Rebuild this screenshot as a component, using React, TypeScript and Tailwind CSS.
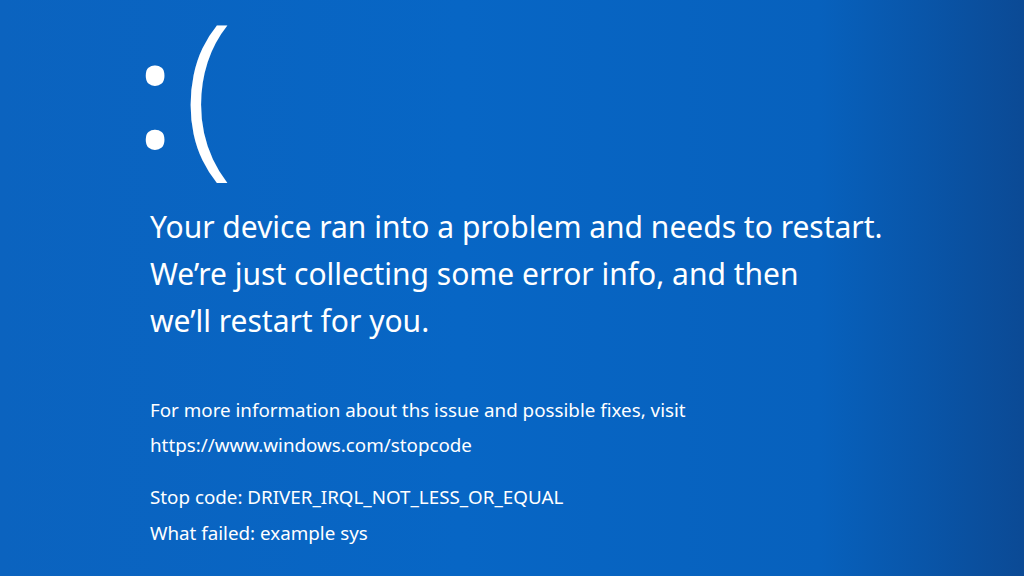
export default function App() {
  return (
    <div
      className="w-[1024px] h-[576px] overflow-hidden text-white bg-[linear-gradient(90deg,#0b63bf_0%,#0766c5_45%,#0761bd_80%,#0b4a95_100%)]"
      style={{ fontFamily: '"Noto Sans", "Open Sans", sans-serif' }}
    >
      <div className="pl-[150px]">
        {/* sad face */}
        <div className="h-[176px] flex items-start">
          <span className="text-[150px] leading-none font-normal -ml-[15px] mt-[15px]">:</span>
          <span className="text-[180px] leading-none font-light ml-[8px] -mt-[5px]">(</span>
        </div>

        <div className="mt-[27px] text-[30px] leading-[47px]">
          <p>Your device ran into a problem and needs to restart.</p>
          <p>We’re just collecting some error info, and then</p>
          <p>we’ll restart for you.</p>
        </div>

        <div className="mt-[49px] text-[18.8px] leading-[35px]">
          <p>For more information about ths issue and possible fixes, visit</p>
          <p>https://www.windows.com/stopcode</p>
        </div>

        <div className="mt-[16px] text-[18.8px] leading-[36px]">
          <p>Stop code: DRIVER_IRQL_NOT_LESS_OR_EQUAL</p>
          <p>What failed: example sys</p>
        </div>
      </div>
    </div>
  );
}
